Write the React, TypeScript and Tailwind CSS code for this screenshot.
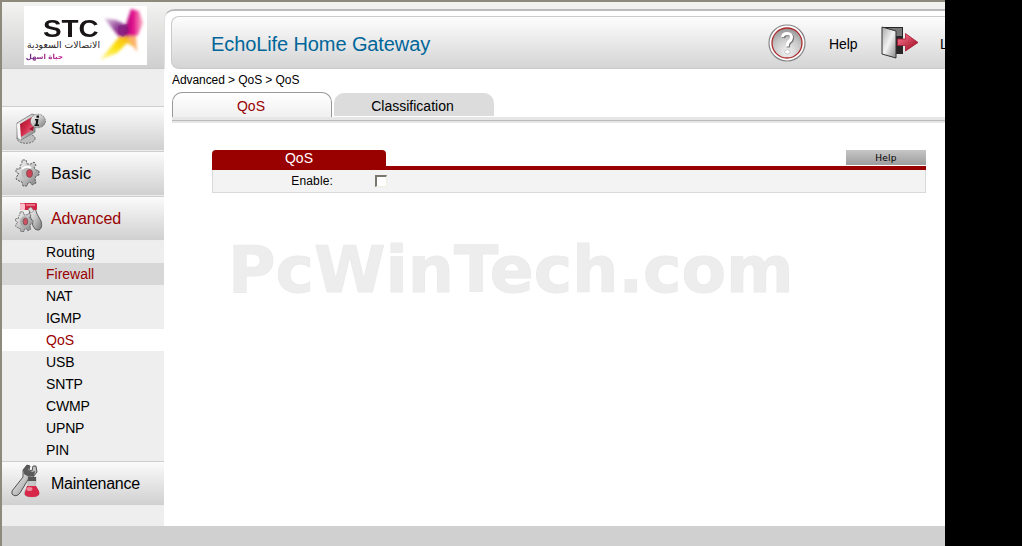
import React from 'react';

function StcLogo() {
  return (
    <div className="relative ml-[22px] mt-1 h-[59px] w-[123px] overflow-hidden bg-white">
      <svg className="absolute inset-0" width="123" height="59" viewBox="0 0 123 59">
        <defs>
          <filter id="soft" x="-30%" y="-30%" width="160%" height="160%">
            <feGaussianBlur stdDeviation="1.4" />
          </filter>
          <linearGradient id="violet" x1="0" y1="0" x2="1" y2="1">
            <stop offset="0" stopColor="#e9d6e9" />
            <stop offset="0.55" stopColor="#8d3a92" />
            <stop offset="1" stopColor="#c4147f" />
          </linearGradient>
          <linearGradient id="pink" x1="0" y1="0" x2="1" y2="0">
            <stop offset="0" stopColor="#8c1579" />
            <stop offset="0.5" stopColor="#e3098b" />
            <stop offset="1" stopColor="#fbb9c4" />
          </linearGradient>
          <linearGradient id="gold" x1="1" y1="0" x2="0" y2="1">
            <stop offset="0" stopColor="#f6a21b" />
            <stop offset="0.5" stopColor="#fbe10f" />
            <stop offset="1" stopColor="#fff6a0" />
          </linearGradient>
        </defs>
        <g filter="url(#soft)">
          <path d="M80 12 L92 14 L104 20 L103 30 L95 31 Z" fill="url(#violet)" />
          <path d="M100 25 L104 12 L107 3 L115 5 L119 17 L114 29 L105 33 L99 30 Z" fill="url(#pink)" />
          <path d="M95 31 L108 30 L112 42 L103 37 L93 47 L76 54 Z" fill="url(#gold)" />
          <path d="M103 31 L112 30 L113 46 Z" fill="#fbb36a" />
        </g>
        <path d="M94 20 L103 18 L105 25 L99 31 L94 27Z" fill="#7a1b7b" opacity="0.55" />
      </svg>
      <span className="absolute left-[19px] top-[13px] origin-left scale-x-[1.16] font-['Liberation_Sans',Arial,sans-serif] text-[24px] font-bold leading-[20px] text-[#191516]">STC</span>
      <span dir="rtl" className="absolute right-[47px] top-[34px] whitespace-nowrap font-['DejaVu_Sans',sans-serif] text-[9.3px] leading-[10px] tracking-[-0.1px] text-[#292526]">الاتصالات السعودية</span>
      <span dir="rtl" className="absolute right-[84px] top-[46px] whitespace-nowrap bg-gradient-to-r from-[#6c2786] to-[#c31889] bg-clip-text font-['DejaVu_Sans',sans-serif] text-[7px] font-bold leading-[10px] text-transparent">حياة اسهل</span>
    </div>
  );
}

function Metal() {
  return (
    <defs>
      <linearGradient id="metal" x1="0" y1="0" x2="1" y2="1">
        <stop offset="0" stopColor="#fafafa" />
        <stop offset="0.5" stopColor="#c4c4c4" />
        <stop offset="1" stopColor="#777" />
      </linearGradient>
      <linearGradient id="ruby" x1="0" y1="0" x2="1" y2="1">
        <stop offset="0" stopColor="#9d1029" />
        <stop offset="0.5" stopColor="#d12a4a" />
        <stop offset="1" stopColor="#f08a9b" />
      </linearGradient>
    </defs>
  );
}

const iconClass = 'absolute left-2 top-0';

function StatusIcon() {
  return (
    <svg className={iconClass} width="42" height="44" viewBox="0 0 42 44">
      <Metal />
      <ellipse cx="16" cy="31.500" rx="9" ry="4.800" fill="#bdbdbd" stroke="#555" strokeWidth=".8" strokeDasharray="2 1" />
      <path d="M7 16 L22 7 L25 8 L25 25 L11 33 L7 31 Z" fill="url(#metal)" stroke="#777" strokeWidth=".8" />
      <path d="M7 17 L8 31 L11 33 L10 17Z" fill="#f7f7f7" />
      <path d="M10 17 L22 10 L23 23 L11 30 Z" fill="url(#ruby)" />
      <path d="M19 22 l5 -3 -1 5z" fill="#a81530" />
      <ellipse cx="28" cy="14" rx="7.500" ry="6.800" fill="url(#metal)" stroke="#777" strokeWidth=".8" strokeDasharray="2 1" />
      <path d="M26.500 8.500H29v2.300h-2.500zM25 12h3.500l-.8 5.500H29V19h-4.500v-1.500h1l.7-4H25z" fill="#111" />
    </svg>
  );
}

const gear = 'M10 4 L10 1 L14 1 L15 5 L19 5 L22 3 L24 6 L22 9 L24 11 L27 12 L27 16 L24 17 L23 20 L24 24 L20 26 L18 23 L16 24 L15 27 L11 27 L10 23 L7 22 L4 20 L5 17 L7 15 L4 13 L4 10 L8 10 L8 7 Z';

function BasicIcon() {
  return (
    <svg className={iconClass} width="42" height="44" viewBox="0 0 42 44">
      <g transform="translate(2 7)">
        <path d={gear} fill="url(#metal)" stroke="#555" strokeWidth=".9" strokeDasharray="2.5 1" />
        <ellipse cx="15" cy="14" rx="5.500" ry="6.500" fill="#bbb" />
        <ellipse cx="17.500" cy="14.500" rx="3" ry="4" fill="#d04055" stroke="#7d4f56" strokeWidth=".9" />
        <path d="M10 10 Q14 6 19 9" stroke="#fff" strokeWidth="2" fill="none" />
      </g>
    </svg>
  );
}

function AdvancedIcon() {
  return (
    <svg className={iconClass} width="42" height="44" viewBox="0 0 42 44">
      <path d="M19 12 L25 11 L27 17 L31 24 Q33 31 29 33 Q25 34 23 29 L20 18 Z" fill="url(#metal)" stroke="#555" strokeWidth=".9" />
      <g transform="translate(2.500 14) scale(.76)">
        <path d={gear} fill="url(#metal)" stroke="#555" strokeWidth="1" strokeDasharray="2.5 1" />
        <ellipse cx="16" cy="14" rx="6" ry="7" fill="#aaa" />
        <ellipse cx="17" cy="14" rx="3" ry="4.3" fill="#cf5264" stroke="#704c51" />
      </g>
      <rect x="10" y="6" width="17" height="7" rx="1" fill="#cf2745" />
      <rect x="10" y="6.500" width="5" height="6.500" rx="1" fill="#ffc0ce" />
      <path d="M16 8h9" stroke="#ef8799" strokeWidth="1.5" />
      <path d="M18 12l3-2 3 4-3 2z" fill="#ddd" stroke="#777" strokeWidth=".5" />
    </svg>
  );
}

function MaintenanceIcon() {
  return (
    <svg className={iconClass} width="42" height="44" viewBox="0 0 42 44">
      <path d="M13 8 L17 3 L20 4 L19 8 L22 9 L23 4 L26 4 L27 10 L23 15 L19 16 L10 31 Q6 36 2 32 L2 29 L13 15 Z" fill="url(#metal)" stroke="#444" strokeWidth=".9" />
      <path d="M13 8 L17 3 L20 4 L18 8 L22 10 L25 9 L24 14 L19 15 L14 12 Z" fill="#595959" />
      <path d="M18 15h8v5l-1 3 4 7q1 5-7 5t-8-4l4-8z" fill="#c8c8c8" stroke="#999" strokeWidth=".5" />
      <path d="M18 15h8v4h-8z" fill="#555" />
      <path d="M17 24h9l3 5q2 6-7 6-9 0-7-5z" fill="#d72849" />
      <ellipse cx="19.500" cy="27" rx="3" ry="2" fill="#ef8799" />
    </svg>
  );
}

function SectionLink({ label, icon, active = false }: { label: string; icon: React.ReactNode; active?: boolean }) {
  return (
    <div className={`relative flex h-[45px] items-center border-b border-t border-b-[#ececec] border-t-[#cecece] bg-gradient-to-b from-[#fbfbfb] to-[#d0d0d0] pl-[49px] text-[16px] ${active ? 'text-[#990000]' : 'text-black'}`}>
      {icon}
      <span className={label === 'Maintenance' ? 'pt-px tracking-[-0.25px]' : label === 'Basic' ? 'pt-px tracking-[0.2px]' : 'pt-px tracking-[-0.15px]'}>{label}</span>
    </div>
  );
}

const subItems = ['Routing', 'Firewall', 'NAT', 'IGMP', 'QoS', 'USB', 'SNTP', 'CWMP', 'UPNP', 'PIN'];

function subItemStyle(item: string) {
  if (item === 'Firewall') return 'bg-[#d7d7d7] text-[#990000]';
  if (item === 'QoS') return 'bg-white text-[#990000]';
  if (item === 'Routing') return 'tracking-[0.1px]';
  return 'tracking-[-0.15px] text-black';
}

function Sidebar() {
  return (
    <aside className="flex w-[162px] shrink-0 flex-col bg-[#eeeeee]">
      <div className="h-[67px] border-b border-[#c9c9c9] bg-gradient-to-b from-[#f3f3f2] to-[#cfcfcf]">
        <StcLogo />
      </div>
      <div className="h-[37px]" />
      <SectionLink label="Status" icon={<StatusIcon />} />
      <SectionLink label="Basic" icon={<BasicIcon />} />
      <SectionLink label="Advanced" icon={<AdvancedIcon />} active />
      <ul className="h-[220px]">
        {subItems.map((item) => (
          <li key={item} className={`h-[22px] pl-11 text-[14px] leading-[22px] ${subItemStyle(item)}`}>{item}</li>
        ))}
      </ul>
      <SectionLink label="Maintenance" icon={<MaintenanceIcon />} />
    </aside>
  );
}

function HelpIcon() {
  return (
    <svg width="38" height="38" viewBox="0 0 38 38">
      <defs>
        <radialGradient id="disc" cx=".5" cy=".8" r=".8">
          <stop offset="0" stopColor="#f4f4f4" />
          <stop offset=".6" stopColor="#c5c5c5" />
          <stop offset="1" stopColor="#929292" />
        </radialGradient>
      </defs>
      <circle cx="19" cy="19" r="18" fill="#fff" stroke="#858585" strokeWidth="1.2" />
      <circle cx="19" cy="19" r="15" fill="url(#disc)" stroke="#ae2c30" strokeWidth="1.3" />
      <path d="M15.500 14q.5-3.500 4.800-3.500 4.700.2 4.200 4.300-.3 2.200-2.500 3.700-1.800 1.400-1.700 5" fill="none" stroke="#777" strokeWidth="3.2" />
      <path d="M14.500 13q.5-3.500 4.800-3.500 4.700.2 4.200 4.300-.3 2.200-2.500 3.700-1.800 1.400-1.700 5" fill="none" stroke="#fff" strokeWidth="3" />
      <ellipse cx="19.400" cy="27.800" rx="2.700" ry="2.200" fill="#fff" stroke="#999" strokeWidth=".5" />
    </svg>
  );
}

function LogoutIcon() {
  return (
    <svg width="38" height="34" viewBox="0 0 38 34">
      <defs>
        <linearGradient id="door" x1="0" y1="0" x2="1" y2="1">
          <stop offset="0" stopColor="#aaa" />
          <stop offset=".5" stopColor="#f2f2f2" />
          <stop offset="1" stopColor="#888" />
        </linearGradient>
        <linearGradient id="arrow" x1="0" y1="0" x2="1" y2="1">
          <stop offset="0" stopColor="#ff7994" />
          <stop offset="1" stopColor="#980519" />
        </linearGradient>
      </defs>
      <path d="M1 1h21v27H12z" fill="#292526" />
      <path d="M6 2h15v8h-6z" fill="#777" />
      <path d="M1 1l14 4v27L1 28z" fill="url(#door)" stroke="#333" strokeWidth="1" />
      <path d="M16.500 13h8V7.500L37 16.500 24.500 25v-5.500h-8z" fill="url(#arrow)" stroke="#a61831" strokeWidth=".8" />
    </svg>
  );
}

function Header() {
  return (
    <div className="h-[67px] bg-gradient-to-b from-[#f3f3f0] to-[#d4d4d4] pt-[7px]">
      <div className="h-[60px] overflow-hidden rounded-tl-[10px] border-l border-t-2 border-[#bcbcbc] border-l-[#e0e0e0] bg-white pl-[6px] pt-[5px]">
        <div className="flex h-[53px] items-center rounded-l-[8px] border border-r-0 border-[#cacaca] bg-gradient-to-b from-[#fdfdfd] via-[#e9e9e9] to-[#d4d4d4] pl-[39px]">
          <span className="w-[557px] whitespace-nowrap pt-[2px] text-[20px] tracking-[-0.1px] text-[#006699]">EchoLife Home Gateway</span>
          <HelpIcon />
          <span className="ml-[23px] w-[52px] pt-[3px] text-[14px] tracking-[-0.1px]">Help</span>
          <LogoutIcon />
          <span className="ml-[21px] w-[5px] overflow-hidden pt-[3px] text-[14px]">L</span>
        </div>
      </div>
    </div>
  );
}

function Tabs() {
  return (
    <div className="ml-2 mt-[3px]">
      <div className="flex h-[25px] gap-[2px]">
        <div className="w-[160px] rounded-t-[10px] border border-b-0 border-[#999999] bg-gradient-to-b from-white to-[#f0f0f0] pr-[2px] text-center text-[14px] leading-[27px] text-[#990000]">QoS</div>
        <div className="mt-px h-[23px] w-[160px] rounded-t-[10px] bg-[#dcdcdc] pr-[3px] text-center text-[14px] leading-[26px]">Classification</div>
      </div>
      <div className="h-[6px] border-b-2 border-[#e6e6e6] bg-[#e6e6e6] pt-[3px]">
        <div className="h-px bg-[#bbbbbb]" />
      </div>
    </div>
  );
}

function QosPanel() {
  return (
    <section className="ml-12 mt-[27px] w-[714px]">
      <div className="flex h-4 justify-between">
        <div className="h-4 w-[174px] rounded-t-[4px] bg-[#990000] text-center text-[14px] leading-[17px] text-white">QoS</div>
        <button className="h-[15px] w-20 bg-gradient-to-b from-[#c6c6c6] to-[#9d9d9d] font-['DejaVu_Sans',sans-serif] text-[9px] leading-[16px] tracking-[0.2px] text-black">Help</button>
      </div>
      <div className="h-1 bg-[#990000]" />
      <div className="flex h-[23px] items-start border border-t-0 border-[#d9d9d9] bg-[#f3f3f3]">
        <span className="w-[120px] text-right text-[12px] leading-[22px] tracking-[0.15px]">Enable:</span>
        <input type="checkbox" aria-label="Enable" className="ml-[42px] mt-[5px] size-3 appearance-none border-2 border-b border-r border-[#79776b] border-b-[#f1efe2] border-r-[#f1efe2] bg-white" />
      </div>
    </section>
  );
}

export default function App() {
  return (
    <div className="flex h-[546px] w-[1022px] overflow-hidden bg-black font-['Liberation_Sans',Arial,sans-serif] leading-normal text-black">
      <div className="flex w-[945px] flex-col border-l-2 border-t-2 border-[#8d8a7c] bg-[#d0d0d0]">
        <div className="flex h-[524px] shrink-0">
          <Sidebar />
          <main className="min-w-0 grow bg-white">
            <Header />
            <div className="ml-2 h-5 whitespace-nowrap text-[12px] leading-[22px] tracking-[-0.07px]">Advanced &gt; QoS &gt; QoS</div>
            <Tabs />
            <QosPanel />
            <div className="ml-[64px] mt-[37px] w-[575px] origin-left scale-x-[1.014] whitespace-nowrap font-['DejaVu_Sans',sans-serif] text-[64px] font-bold leading-[80px] text-[#ededed] [-webkit-text-stroke:1px_#ebebeb]">PcWinTech.com</div>
          </main>
        </div>
      </div>
    </div>
  );
}
